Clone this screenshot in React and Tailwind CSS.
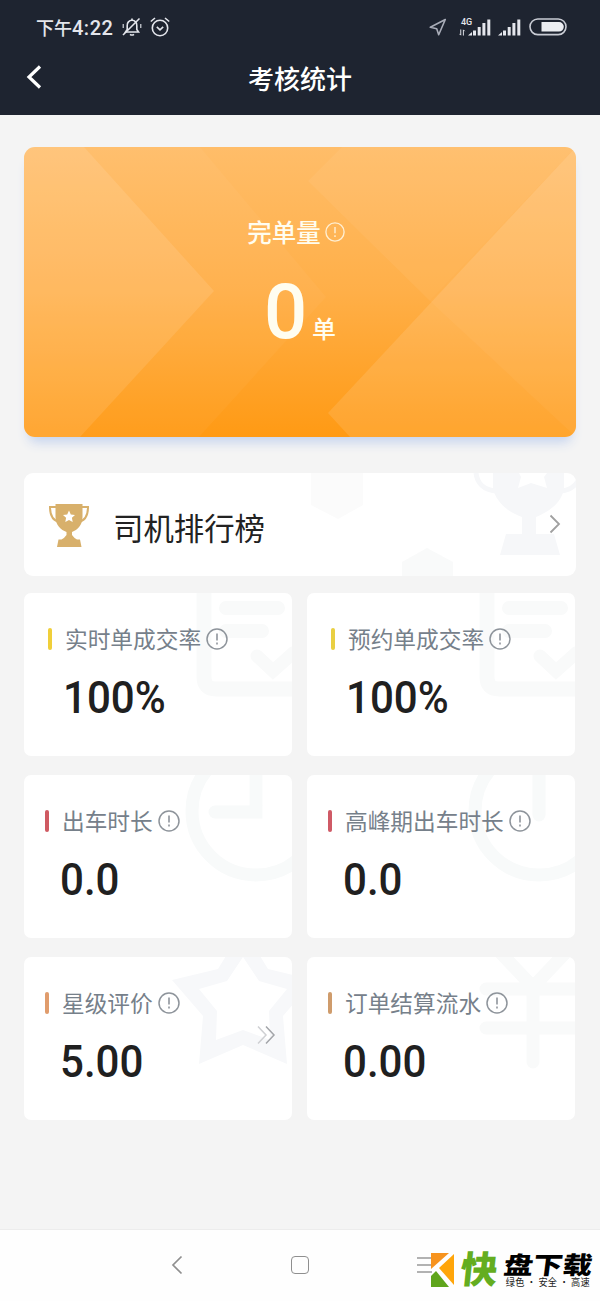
import React from "react";
import clsx from "clsx";

/* ── Info mark: thin circle with an exclamation ── */
const InfoIcon = ({ className }) => (
  <svg viewBox="0 0 22 22" fill="none" stroke="currentColor" className={className}>
    <circle cx="11" cy="11" r="10" strokeWidth="1.5" />
    <path d="M11 5.500v7" strokeWidth="1.6" />
    <path d="M11 14.600v1.800" strokeWidth="1.6" />
  </svg>
);

/* ── Signal bars ── */
const Signal = () => (
  <svg viewBox="0 0 23 17" className="w-[23px] h-[17px]" fill="#e4e6ec">
    <path d="M0 16.500 4 13v3.500z" />
    <rect x="5" y="11.5" width="3" height="5" />
    <rect x="9.7" y="8" width="3" height="8.5" />
    <rect x="14.4" y="4" width="3" height="12.5" />
    <rect x="19.3" y="0.5" width="3" height="16" />
  </svg>
);

/* ── Status bar ── */
const StatusBar = () => (
  <div className="flex h-[54px] items-center justify-between pl-9 pr-[33px] text-[#e4e6ec]">
    <div className="flex items-center">
      <span className="w-[78px] whitespace-nowrap text-[18px] font-medium leading-6">
        下午<span className="font-[Roboto] text-[20px] tracking-[0.5px]">4:22</span>
      </span>
      <svg viewBox="0 0 20 20" className="ml-2 w-5 h-5" fill="none" stroke="currentColor" strokeWidth="1.6">
        <path d="M3.500 15h13l-1.700-2.500V8.600A4.800 4.800 0 0 0 10 3.300a4.800 4.800 0 0 0-4.800 5.300v3.900z" />
        <path d="M10 3.300V1.500M8 17.300q2 1.400 4 0" />
        <path d="M1 18 17.500 1.500" />
        <path d="M1.200 7v4M18.800 7v4" strokeWidth="1.1" />
      </svg>
      <svg viewBox="0 0 20 20" className="ml-2 w-5 h-5" fill="none" stroke="currentColor" strokeWidth="1.6">
        <circle cx="10" cy="11" r="7.7" />
        <path d="m6.800 9.800 3.200 3 3.200-3M.8 4.500 5 1M19.200 4.500 15 1" />
      </svg>
    </div>
    <div className="flex items-center">
      <svg viewBox="0 0 18 18" className="w-[18px] h-[18px] text-[#a9adb8]" fill="none" stroke="currentColor" strokeWidth="1.6">
        <path d="M16.300 1.500 1.300 9.300l6.400 1.400 2 6z" strokeLinejoin="round" />
      </svg>
      <div className="ml-3 flex w-8 items-end">
        <div className="-mr-3 flex h-[18px] w-[14px] shrink-0 flex-col justify-between">
          <span className="pl-[2px] font-[Roboto] text-[9px] font-medium leading-[8px]">4G</span>
          <svg viewBox="0 0 8 7" className="w-[7px] h-[7px]" fill="none" stroke="currentColor" strokeWidth="1.1">
            <path d="M2 0v6.500L.5 5M5 7V.5L6.500 2" />
          </svg>
        </div>
        <div className="ml-[7px]">
          <Signal />
        </div>
      </div>
      <div className="ml-[7px]">
        <Signal />
      </div>
      <svg viewBox="0 0 38 18" className="ml-2 w-[38px] h-[18px]">
        <rect x="1" y="1" width="36" height="15.6" rx="7.8" fill="none" stroke="#c9ccd4" strokeWidth="1.6" />
        <path d="M12.500 4h17.500a4.800 4.800 0 0 1 0 9.600H12.500z" fill="#eceef2" />
      </svg>
    </div>
  </div>
);

/* ── Order total banner ── */
const TotalCard = () => (
  <div className="relative h-[290px] rounded-[11px] shadow-[0_10px_12px_-5px_#c3d2ee]">
    <svg viewBox="0 0 552 290" className="absolute inset-0 h-full w-full rounded-[11px]">
      <defs>
        <linearGradient id="base" x1="0" y1="0" x2="0" y2="1">
          <stop offset="0" stopColor="#ffbd69" />
          <stop offset="0.5" stopColor="#ffaf48" />
          <stop offset="1" stopColor="#ff9a14" />
        </linearGradient>
      </defs>
      <rect width="552" height="290" fill="url(#base)" />
      <path d="M0 0h176l126 150-127 140H0z" fill="#fff" fillOpacity="0.035" />
      <path d="M0 0h60l130 144L56 290H0z" fill="#fff" fillOpacity="0.1" />
      <path d="M318 0h234L406 154 284 34z" fill="#fff" fillOpacity="0.05" />
      <path d="M552 0v290H326l-22-24z" fill="#fff" fillOpacity="0.11" />
      <path d="M552 0v290L406 154z" fill="#fff" fillOpacity="0.04" />
    </svg>
    <div className="relative flex flex-col items-center pt-[69px] text-[#fffdf0]">
      <div className="flex items-center -translate-x-1">
        <span className="text-[24.5px] font-medium leading-8">完单量</span>
        <InfoIcon className="ml-1 w-5 h-5 opacity-80" />
      </div>
      <div className="mt-[24px] flex items-baseline">
        <span className="font-[Roboto] text-[76px] font-medium leading-[80px]">0</span>
        <span className="ml-[5px] text-[24px] font-medium leading-8">单</span>
      </div>
    </div>
  </div>
);

const Trophy = ({ className, star }) => (
  <svg viewBox="0 0 42 44" className={className}>
    <path d="M8 4H2c0 9 2.500 14 10 15M34 4h6c0 9-2.500 14-10 15" fill="none" stroke="currentColor" strokeWidth="2" />
    <path d="M7.500 1h27v13c0 8-5 13-10.500 15v3q2 3 5 4.500h3l1.500 7.500H9l1.500-7.500h3q3-1.500 5-4.500v-3C13 27 7.500 22 7.500 14z" fill="currentColor" />
    <path d="m21 7.500 1.800 3.900 4.200.5-3.100 2.900.8 4.200-3.700-2.100-3.700 2.100.8-4.200-3.100-2.900 4.200-.5z" fill={star} />
  </svg>
);

/* ── Ranking row ── */
const RankingRow = () => (
  <div className="relative mt-9 flex h-[103px] items-center overflow-hidden rounded-[9px] bg-white pl-6 pr-[15px]">
    <svg viewBox="0 0 552 103" className="absolute inset-0 h-full w-full">
      <path d="M287 0h52v32l-25 14-27-14z" fill="#fbfbfb" />
      <path d="M378 103V89l25-14 26 14v14z" fill="#f9fafa" />
      <g fill="#f6f7f9">
        <path d="M469 0h71v16c-3 15-16 23-28 28v17h18l6 21h-60l6-21h16V44c-15-5-26-16-29-28z" />
        <path d="M452 0c1 10 8 17 20 18M557 0c-2 10-9 17-20 18" fill="none" stroke="#f6f7f9" strokeWidth="5" />
      </g>
      <path d="M495 0h28l-3 4 3 11-16-5-13 5 3-11z" fill="#fff" />
    </svg>
    <Trophy className="relative h-11 w-[42px] text-[#d8b06b]" star="#fff" />
    <span className="relative ml-[23px] mt-[5px] text-[30.4px] leading-10 text-[#222]">司机排行榜</span>
    <svg viewBox="0 0 12 20" className="relative ml-auto mb-[2px] w-3 h-5" fill="none" stroke="#a0a0a0" strokeWidth="1.8">
      <path d="m1.500 1.500 8.500 8.500-8.500 8.500" />
    </svg>
  </div>
);

/* ── Pale drawings in the top right corner of the cards ── */
const ListMark = () => (
  <svg viewBox="0 0 268 163" className="absolute inset-0 h-full w-full" fill="none" stroke="#f9fafa">
    <path d="M180 0v84q0 12 12 12h76" strokeWidth="15" />
    <path d="M202 15h52M202 38h36" strokeWidth="14" strokeLinecap="round" />
    <path d="m233 63 16 15 20-18" strokeWidth="13" strokeLinecap="round" />
  </svg>
);

const ClockMark = ({ hands }) => (
  <svg viewBox="0 0 268 163" className="absolute inset-0 h-full w-full" fill="none" stroke="#f8fafa">
    <circle cx="232" cy="36" r="64" strokeWidth="13" />
    <path d={hands} strokeWidth="13" strokeLinecap="round" />
  </svg>
);

const StarMark = () => (
  <svg viewBox="0 0 268 163" className="absolute inset-0 h-full w-full" fill="#f7f8fa" fillRule="evenodd">
    <path d="M219-29 244 12 290 23 259 59 263 107 219 88 175 107 179 59 148 23 194 12zM219 0 203 24 175 32 193 54 192 83 219 73 246 83 245 54 263 32 235 24z" />
  </svg>
);

const YuanMark = () => (
  <svg viewBox="0 0 268 163" className="absolute inset-0 h-full w-full" fill="none" stroke="#f9fafa" strokeWidth="13" strokeLinecap="round">
    <path d="m190-8 36 38L262-8M226 30v75M179 32h95M179 71h95" />
  </svg>
);

/* ── Stat card ── */
const StatCard = ({ label, value, bar, inset, gap, mark, more }) => (
  <div className={clsx("relative h-[163px] overflow-hidden rounded-[7px] bg-white pt-[30px]", inset)}>
    {mark}
    <div className="relative flex items-center">
      <span className={clsx("h-[22px] w-1 rounded-full", bar)} />
      <span className={clsx("whitespace-nowrap text-[22.7px] leading-8 text-[#76808a]", gap)}>{label}</span>
      <InfoIcon className="ml-[5px] w-[22px] h-[22px] text-[#8e949b]" />
    </div>
    <div className="relative ml-[15px] mt-[18px] origin-left scale-x-[0.935] font-[Roboto] text-[45px] font-medium leading-[50px] text-[#202020]">
      {value}
    </div>
    {more && (
      <svg viewBox="0 0 20 20" className="absolute right-4 top-[68px] w-5 h-5" fill="none" strokeWidth="1.5">
        <path d="m2 1.500 8 8.500-8 8.500" stroke="#cfd0d3" />
        <path d="m10 1.500 8 8.500-8 8.500" stroke="#a3a5a9" />
      </svg>
    )}
  </div>
);

const stats = [
  { label: "实时单成交率", value: "100%", bar: "bg-[#f0cf3a]", inset: "pl-6", gap: "ml-[13px]", mark: <ListMark /> },
  { label: "预约单成交率", value: "100%", bar: "bg-[#e9cf42]", inset: "pl-6", gap: "ml-[13px]", mark: <ListMark /> },
  { label: "出车时长", value: "0.0", bar: "bg-[#cf5a62]", inset: "pl-[21px]", gap: "ml-[13px]", mark: <ClockMark hands="M232-8v45h-41" /> },
  { label: "高峰期出车时长", value: "0.0", bar: "bg-[#cf5a66]", inset: "pl-[21px]", gap: "ml-[13px]", mark: <ClockMark hands="M232-8v48" /> },
  { label: "星级评价", value: "5.00", bar: "bg-[#e09c6c]", inset: "pl-[21px]", gap: "ml-[13px]", mark: <StarMark />, more: true },
  { label: "订单结算流水", value: "0.00", bar: "bg-[#cf9c6c]", inset: "pl-[21px]", gap: "ml-[13px]", mark: <YuanMark /> },
];

/* ── System navigation with the site badge ── */
const BottomNav = () => (
  <div className="mt-auto flex h-[72px] items-center border-t border-[#ececec] bg-[#fefefe] pb-[2px]">
    <svg viewBox="0 0 12 20" className="ml-[171px] w-3 h-5" fill="none" stroke="#8f8f8f" strokeWidth="1.7">
      <path d="m10.500 1.500-8.500 8.500 8.500 8.500" />
    </svg>
    <span className="ml-[108px] h-[18px] w-[18px] rounded-[4px] border-[1.7px] border-[#8f8f8f]" />
    <div className="ml-[108px] flex items-center pt-[10px]">
      <svg viewBox="0 0 38 36" className="h-9 w-[38px]">
        <path d="M0 6h15M0 13h15M0 20h15" stroke="#999" strokeWidth="1.5" />
        <path d="M14 1h18L14 17z" fill="#f7931e" />
        <path d="M14 35V24l5-5 13 16z" fill="#5fa51c" />
        <path d="M37 2v31L22 16z" fill="#ffa50a" />
      </svg>
      <span className="mb-[5px] ml-[6px] inline-block -skew-x-6 text-[37px] font-black leading-9 text-[#64ad20]">快</span>
      <div className="ml-[6px] flex flex-col">
        <span className="inline-block -skew-x-6 scale-y-[0.82] whitespace-nowrap text-[29.5px] font-black leading-6 text-black">盘下载</span>
        <span className="mt-px w-0 origin-left scale-x-[0.92] whitespace-nowrap pl-[2px] text-[10px] leading-3 tracking-[0.2px] text-[#222]">绿色 · 安全 · 高速</span>
      </div>
    </div>
  </div>
);

export default function App() {
  return (
    <div className="flex h-[1301px] w-[600px] flex-col overflow-hidden bg-[#f4f4f4] font-['Noto_Sans_CJK_SC',sans-serif]">
      <header className="h-[115px] bg-[#1e2430]">
        <StatusBar />
        <div className="relative flex h-12 items-center justify-center">
          <svg viewBox="0 0 16 24" className="absolute left-[26px] top-[11px] w-4 h-6" fill="none" stroke="#fff" strokeWidth="3.2">
            <path d="M14 1.500 3 12l11 10.500" />
          </svg>
          <h1 className="text-[26px] font-medium leading-9 text-white">考核统计</h1>
        </div>
      </header>
      <main className="px-6 pt-8">
        <TotalCard />
        <RankingRow />
        <div className="mt-[17px] grid grid-cols-[268px_268px] gap-x-[15px] gap-y-[19px]">
          {stats.map((s) => (
            <StatCard key={s.label} {...s} />
          ))}
        </div>
      </main>
      <BottomNav />
    </div>
  );
}
